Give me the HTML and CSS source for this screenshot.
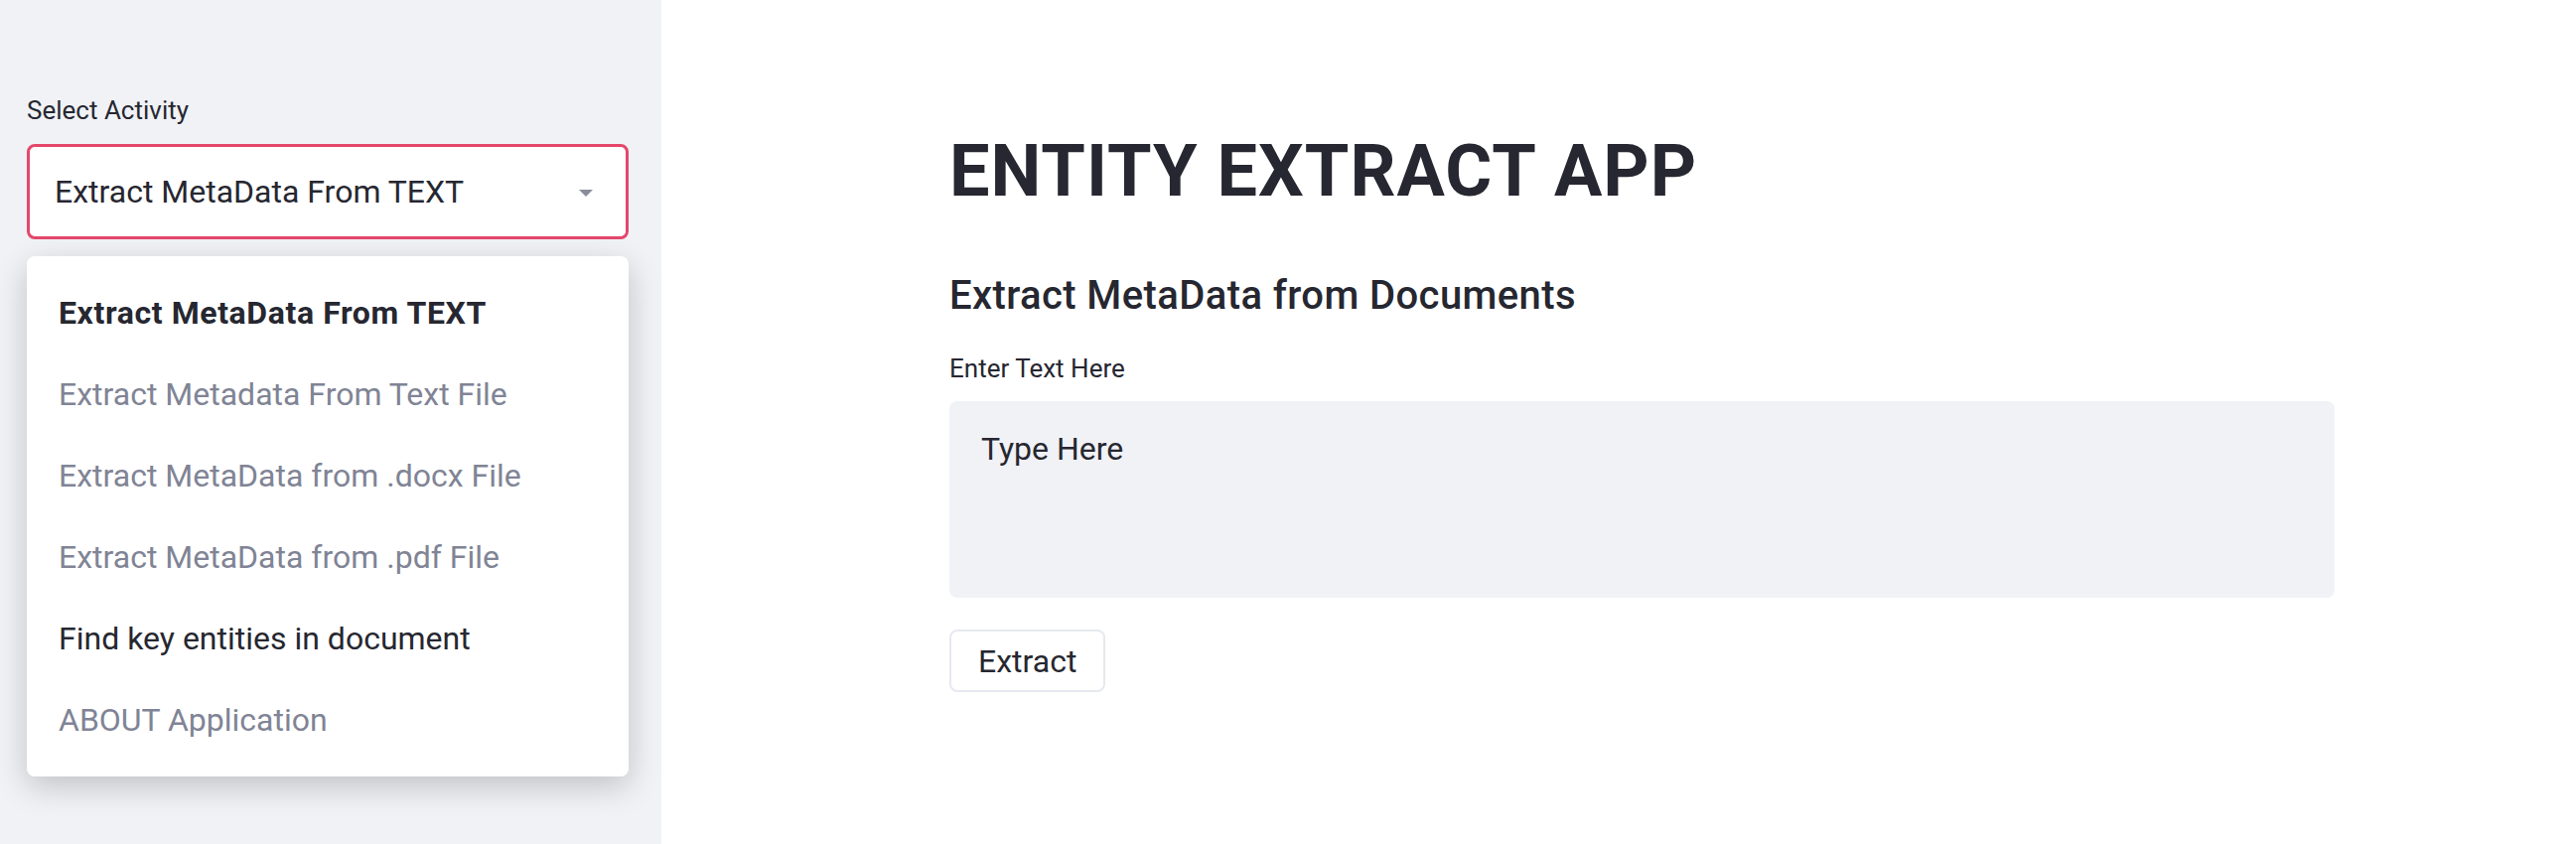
FILE: index.html
```html
<!DOCTYPE html>
<html lang="en">
<head>
<meta charset="utf-8">
<title>Entity Extract App</title>
<link rel="stylesheet" href="styles.css">
</head>
<body>
<div class="app">
  <aside class="sidebar">
    <div class="field-label">Select Activity</div>
    <div class="select-wrap">
      <div class="select">
        <span class="select-value">Extract MetaData From TEXT</span>
        <svg class="caret" width="14" height="7" viewBox="0 0 14 7"><path d="M0 0 H14 L7 7 Z" fill="#8a8d9a"/></svg>
      </div>
      <ul class="menu">
        <li class="menu-item selected">Extract MetaData From TEXT</li>
        <li class="menu-item muted">Extract Metadata From Text File</li>
        <li class="menu-item muted">Extract MetaData from .docx File</li>
        <li class="menu-item muted">Extract MetaData from .pdf File</li>
        <li class="menu-item">Find key entities in document</li>
        <li class="menu-item muted">ABOUT Application</li>
      </ul>
    </div>
  </aside>
  <main class="main">
    <h1 class="title">ENTITY EXTRACT APP</h1>
    <h3 class="subtitle">Extract MetaData from Documents</h3>
    <div class="field-label">Enter Text Here</div>
    <div class="textarea">Type Here</div>
    <button class="btn">Extract</button>
  </main>
</div>
</body>
</html>
```

FILE: styles.css
```css
* { box-sizing: border-box; }
html, body { margin: 0; padding: 0; }
body {
  font-family: Roboto, "Liberation Sans", sans-serif;
  color: #262730;
  background: #ffffff;
}
.app {
  display: flex;
  width: 2594px;
  height: 850px;
  overflow: hidden;
}
.sidebar {
  width: 666px;
  flex: 0 0 666px;
  background: #f0f2f6;
  padding: 95px 33px 0 27px;
}
.field-label {
  font-size: 26px;
  line-height: 32px;
  color: #262730;
}
.select-wrap {
  position: relative;
  margin-top: 18px;
}
.select {
  height: 96px;
  background: #ffffff;
  border: 3px solid #e4476a;
  border-radius: 8px;
  display: flex;
  align-items: center;
  justify-content: space-between;
  padding: 0 33px 0 25px;
}
.select-value {
  font-size: 32px;
  line-height: 40px;
  color: #262730;
}
.caret { display: block; margin-top: 2px; }
.menu {
  position: absolute;
  top: 113px;
  left: 0;
  right: 0;
  margin: 0;
  padding: 16px 0;
  list-style: none;
  background: #ffffff;
  border-radius: 8px;
  box-shadow: 0 10px 32px rgba(0, 0, 0, 0.2);
}
.menu-item {
  height: 82px;
  display: flex;
  align-items: center;
  padding-left: 32px;
  font-size: 32px;
  color: #262730;
}
.menu-item.muted { color: #808495; }
.menu-item.selected { font-weight: 700; letter-spacing: 0.6px; }
.main {
  flex: 1;
  padding: 130px 243px 0 290px;
}
.title {
  margin: 0;
  font-size: 72px;
  line-height: 86px;
  font-weight: 700;
  letter-spacing: 1px;
  color: #262730;
}
.subtitle {
  margin: 58px 0 0;
  font-size: 40px;
  line-height: 48px;
  font-weight: 500;
  letter-spacing: 0.4px;
  color: #262730;
}
.main .field-label { margin-top: 33px; }
.textarea {
  margin-top: 17px;
  height: 198px;
  background: #f0f2f6;
  border-radius: 8px;
  padding: 24px 32px;
  font-size: 32px;
  line-height: 48px;
  color: #262730;
}
.btn {
  margin-top: 32px;
  height: 63px;
  padding: 0 27px;
  background: #ffffff;
  border: 2px solid #e6e9ef;
  border-radius: 8px;
  font-family: inherit;
  font-size: 32px;
  color: #262730;
}
```
